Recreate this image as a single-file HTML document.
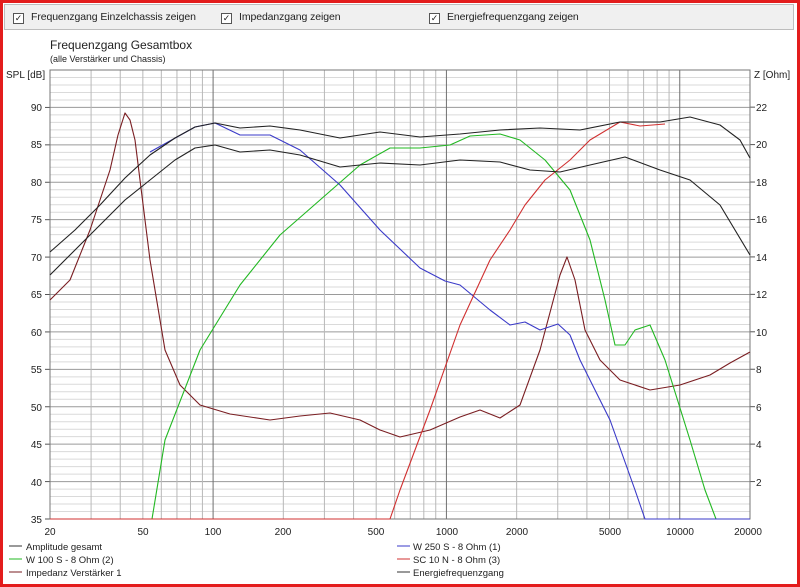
<!DOCTYPE html>
<html><head><meta charset="utf-8"><style>
html,body{margin:0;padding:0}
body{width:800px;height:587px;overflow:hidden;background:#fff;font-family:"Liberation Sans",sans-serif}
#frame{position:absolute;left:0;top:0;width:794px;height:581px;border:3px solid #e31c1c;background:#fff}
#bar{position:absolute;left:4px;top:4px;width:790px;height:26px;background:#f0f0f0;border:1px solid #bdbdbd;box-sizing:border-box}
.cb{position:absolute;top:6px;font-size:10.5px;color:#222;line-height:12px;letter-spacing:-0.1px}
.cb span.b{display:inline-block;width:9px;height:9px;border:1px solid #555;background:#fff;vertical-align:-1px;margin-right:7px;font-size:9px;line-height:9px;text-align:center}
svg{position:absolute;left:0;top:0}
</style></head><body>
<div id="frame"></div>
<div id="bar">
<div class="cb" style="left:8px"><span class="b">✓</span>Frequenzgang Einzelchassis zeigen</div>
<div class="cb" style="left:216px"><span class="b">✓</span>Impedanzgang zeigen</div>
<div class="cb" style="left:424px"><span class="b">✓</span>Energiefrequenzgang zeigen</div>
</div>
<svg width="800" height="587" xmlns="http://www.w3.org/2000/svg" font-family="Liberation Sans, sans-serif">
<g id="grid"></g>
<rect x="50" y="70" width="700" height="449" fill="none" stroke="#777" stroke-width="1"/>
<text x="50" y="49" font-size="12" fill="#222">Frequenzgang Gesamtbox</text>
<text x="50" y="62" font-size="9" fill="#222">(alle Verstärker und Chassis)</text>
<text x="6" y="78" font-size="10" fill="#222">SPL [dB]</text>
<text x="754" y="78" font-size="10" fill="#222">Z [Ohm]</text>
<g font-size="10" fill="#222" text-anchor="end">
<text x="42" y="111">90</text><text x="42" y="148">85</text><text x="42" y="186">80</text><text x="42" y="223">75</text><text x="42" y="261">70</text><text x="42" y="298">65</text><text x="42" y="336">60</text><text x="42" y="373">55</text><text x="42" y="411">50</text><text x="42" y="448">45</text><text x="42" y="486">40</text><text x="42" y="523">35</text>
</g>
<g font-size="10" fill="#222">
<text x="756" y="111">22</text><text x="756" y="148">20</text><text x="756" y="186">18</text><text x="756" y="223">16</text><text x="756" y="261">14</text><text x="756" y="298">12</text><text x="756" y="336">10</text><text x="756" y="373">8</text><text x="756" y="411">6</text><text x="756" y="448">4</text><text x="756" y="486">2</text>
</g>
<g font-size="10" fill="#222" text-anchor="middle">
<text x="50" y="535">20</text><text x="143" y="535">50</text><text x="213" y="535">100</text><text x="283" y="535">200</text><text x="376" y="535">500</text><text x="447" y="535">1000</text><text x="517" y="535">2000</text><text x="610" y="535">5000</text><text x="680" y="535">10000</text><text x="748" y="535">20000</text>
</g>
<g fill="none" stroke-width="1.1" stroke-linejoin="round">
<polyline stroke="#7a1e22" points="50,300 70,280 90,230 110,170 118,135 125,113 130,120 135,140 150,260 165,350 180,385 200,405 230,414 270,420 300,416 330,413 360,420 380,430 400,437 430,430 460,417 480,410 500,418 520,405 540,350 560,275 567,257 575,280 585,330 600,360 620,380 650,390 680,385 710,375 730,363 750,352"/>
<polyline stroke="#22b822" points="50,519 152,519 165,440 200,350 240,285 280,235 320,200 360,165 390,148 420,148 450,145 470,136 500,134 520,140 545,160 570,190 590,240 605,300 615,345 625,345 635,330 650,325 665,360 690,440 705,490 716,519 750,519"/>
<polyline stroke="#3a3ac8" points="150,152 195,127 215,123 240,135 270,135 300,150 340,185 380,230 420,268 445,281 460,285 490,310 510,325 525,322 540,330 558,324 570,335 580,360 610,420 635,490 645,519 750,519"/>
<polyline stroke="#d03030" points="50,519 390,519 400,490 430,410 460,325 490,260 510,230 525,205 545,180 570,160 590,140 620,122 640,126 665,124"/>
<polyline stroke="#222" points="50,275 75,250 100,225 125,200 150,180 175,160 195,148 215,145 240,152 270,150 300,155 340,167 380,163 420,165 460,160 500,162 530,170 560,172 590,165 625,157 660,170 690,180 720,205 750,255"/>
<polyline stroke="#222" points="50,252 75,230 100,205 125,178 150,155 175,138 195,127 215,123 240,128 270,126 300,130 340,138 380,132 420,137 460,134 500,130 540,128 580,130 620,122 660,122 690,117 720,125 740,140 750,158"/>
</g>
<g font-size="9.5" fill="#222">
<line x1="9" y1="546" x2="22" y2="546" stroke="#333"/><text x="26" y="550">Amplitude gesamt</text>
<line x1="9" y1="559" x2="22" y2="559" stroke="#22b822"/><text x="26" y="563">W 100 S - 8 Ohm (2)</text>
<line x1="9" y1="572" x2="22" y2="572" stroke="#7a1e22"/><text x="26" y="576">Impedanz Verstärker 1</text>
<line x1="397" y1="546" x2="410" y2="546" stroke="#3a3ac8"/><text x="413" y="550">W 250 S - 8 Ohm  (1)</text>
<line x1="397" y1="559" x2="410" y2="559" stroke="#d03030"/><text x="413" y="563">SC 10 N - 8 Ohm (3)</text>
<line x1="397" y1="572" x2="410" y2="572" stroke="#333"/><text x="413" y="576">Energiefrequenzgang</text>
</g>
</svg>
<script>
var g=document.getElementById('grid'),s='';
for(var d=35;d<=95;d++){var y=519-(d-35)*7.483;var c=(d%5==0)?'#9a9a9a':'#dadada';s+='<line x1="50" x2="750" y1="'+y+'" y2="'+y+'" stroke="'+c+'"/>';if(d%5==0&&d<95)s+='<line x1="45" x2="50" y1="'+y+'" y2="'+y+'" stroke="#555"/>';}
for(var z=2;z<=22;z+=2){var y=519-z*18.72;s+='<line x1="750" x2="755" y1="'+y+'" y2="'+y+'" stroke="#555"/>';}
var dec=[10,100,1000,10000];
for(var i=0;i<4;i++)for(var m=1;m<10;m++){var f=dec[i]*m;if(f<20||f>20000)continue;var x=50+233.33*Math.log10(f/20);var c=(m==1)?'#707070':'#b8b8b8';s+='<line y1="70" y2="519" x1="'+x+'" x2="'+x+'" stroke="'+c+'"/>';}
g.innerHTML=s;
</script>
</body></html>
